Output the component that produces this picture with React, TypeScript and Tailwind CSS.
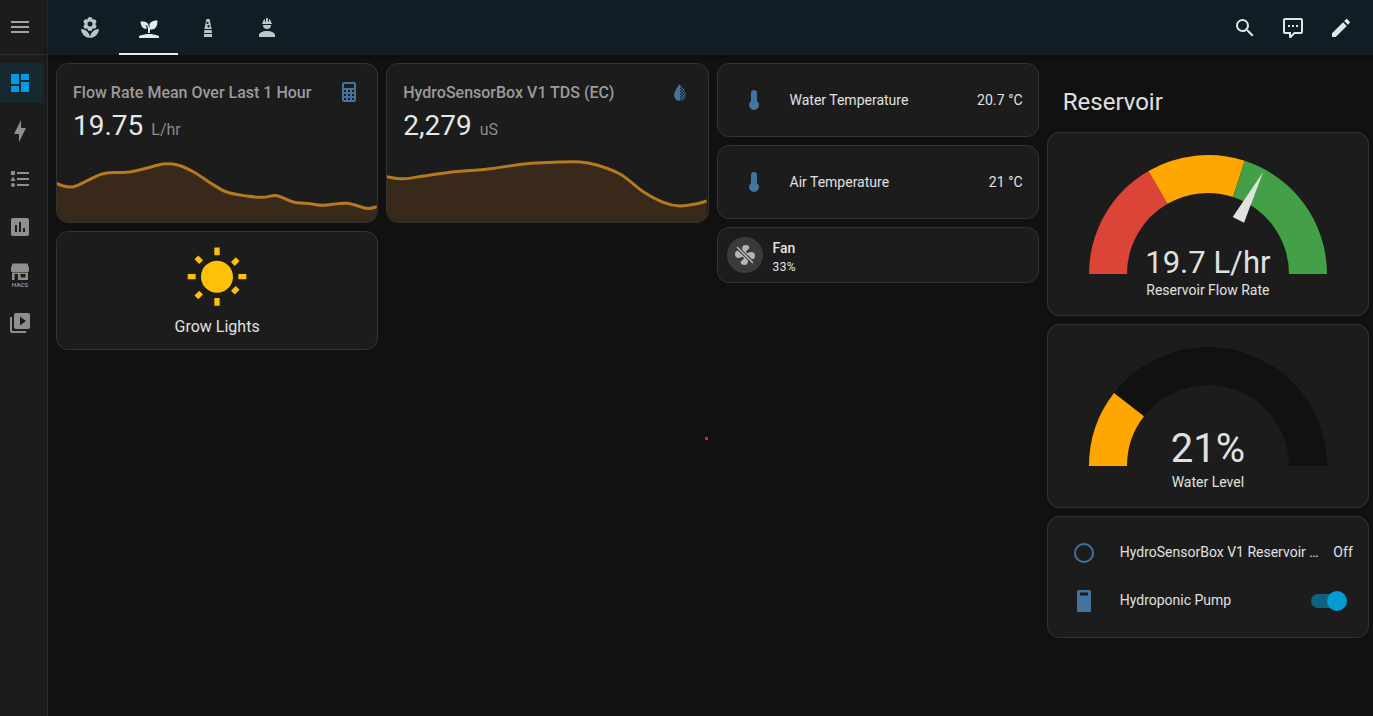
const P = {
  menu: "M3,6H21V8H3V6M3,11H21V13H3V11M3,16H21V18H3V16Z",
  dash: "M13,3V9H21V3M13,21H21V11H13M3,21H11V15H3M3,13H11V3H3V13Z",
  bolt: "M11 15H6L13 1V9H18L11 23V15Z",
  list: "M5,9.5L7.5,14H2.5L5,9.5M3,4H7V8H3V4M5,20A2,2 0 0,0 7,18A2,2 0 0,0 5,16A2,2 0 0,0 3,18A2,2 0 0,0 5,20M9,5V7H21V5H9M9,19H21V17H9V19M9,13H21V11H9V13Z",
  chart: "M19 3H5C3.9 3 3 3.9 3 5V19C3 20.1 3.9 21 5 21H19C20.1 21 21 20.1 21 19V5C21 3.9 20.1 3 19 3M9 17H7V10H9V17M13 17H11V7H13V17M17 17H15V13H17V17Z",
  play: "M4,6H2V20A2,2 0 0,0 4,22H18V20H4M20,2H8A2,2 0 0,0 6,4V16A2,2 0 0,0 8,18H20A2,2 0 0,0 22,16V4C22,2.89 21.1,2 20,2M12,14.5V5.5L18,10L12,14.5Z",
  flower: "M3,13A9,9 0 0,0 12,22C12,17 7.97,13 3,13M12,5.5A2.5,2.5 0 0,1 14.5,8A2.5,2.5 0 0,1 12,10.5A2.5,2.5 0 0,1 9.5,8A2.5,2.5 0 0,1 12,5.5M5.6,10.25A2.5,2.5 0 0,0 8.1,12.75C8.63,12.75 9.12,12.58 9.5,12.31C9.5,12.37 9.5,12.43 9.5,12.5A2.5,2.5 0 0,0 12,15A2.5,2.5 0 0,0 14.5,12.5C14.5,12.43 14.5,12.37 14.5,12.31C14.88,12.58 15.37,12.75 15.9,12.75C17.28,12.75 18.4,11.63 18.4,10.25C18.4,9.25 17.81,8.4 16.97,8C17.81,7.6 18.4,6.74 18.4,5.75C18.4,4.37 17.28,3.25 15.9,3.25C15.37,3.25 14.88,3.41 14.5,3.69C14.5,3.63 14.5,3.56 14.5,3.5A2.5,2.5 0 0,0 12,1A2.5,2.5 0 0,0 9.5,3.5C9.5,3.56 9.5,3.63 9.5,3.69C9.12,3.41 8.63,3.25 8.1,3.25A2.5,2.5 0 0,0 5.6,5.75C5.6,6.74 6.19,7.6 7.03,8C6.19,8.4 5.6,9.25 5.6,10.25M12,22A9,9 0 0,0 21,13C16,13 12,17 12,22Z",
  sprout: "M2,22V20C2,20 7,18 12,18C17,18 22,20 22,20V22H2M11.3,8.6C10.1,4.7 3.5,5.6 3.5,5.6C3.5,5.6 3.7,13.9 9.9,12.7C9.5,9.8 8,9 8,9C10.8,9 11,12.4 11,12.4V17C11.3,17 11.6,17 12,17C12.28,17 12.57,17 12.86,17.03C12.62,15.8 12.9,14.2 13.5,13.2C17.4,14.3 20.5,11.5 20.5,4.5C20.5,4.5 13.5,4 12.2,9C13.1,10.2 12.6,11.1 12.2,11.8C12.1,10.9 11.8,9.6 11.3,8.6Z",
  hat: "M12,15C7.58,15 4,16.79 4,19V21H20V19C20,16.79 16.42,15 12,15M8,9A4,4 0 0,0 12,13A4,4 0 0,0 16,9M11.5,2C11.2,2 11,2.21 11,2.5V5.5H10V3C10,3 7.75,3.86 7.75,6.75C7.75,6.75 7,6.89 7,8H17C16.95,6.89 16.25,6.75 16.25,6.75C16.25,3.86 14,3 14,3V5.5H13V2.5C13,2.21 12.81,2 12.5,2H11.5Z",
  lamp: "M10.4 3H13.6L15.6 13H8.4L10.4 3ZM11.5 5.8A1.1 1.1 0 1 0 11.5 8A1.1 1.1 0 1 0 11.5 5.8ZM12.6 9A1.2 1.2 0 1 0 12.6 11.4A1.2 1.2 0 1 0 12.6 9ZM8.4 14H15.6L16 17H8ZM8 18H16V21H8Z",
  search: "M9.5,3A6.5,6.5 0 0,1 16,9.5C16,11.11 15.41,12.59 14.44,13.73L14.71,14H15.5L20.5,19L19,20.5L14,15.5V14.71L13.73,14.44C12.59,15.41 11.11,16 9.5,16A6.5,6.5 0 0,1 3,9.5A6.5,6.5 0 0,1 9.5,3M9.5,5C7,5 5,7 5,9.5C5,12 7,14 9.5,14C12,14 14,12 14,9.5C14,7 12,5 9.5,5Z",
  comment: "M9,22A1,1 0 0,1 8,21V18H4A2,2 0 0,1 2,16V4C2,2.89 2.9,2 4,2H20A2,2 0 0,1 22,4V16A2,2 0 0,1 20,18H13.9L10.2,21.71C10,21.9 9.75,22 9.5,22V22H9M10,16V19.08L13.08,16H20V4H4V16H10M17,11H15V9H17V11M13,11H11V9H13V11M9,11H7V9H9V11Z",
  pencil: "M20.71,7.04C21.1,6.65 21.1,6 20.71,5.63L18.37,3.29C18,2.9 17.35,2.9 16.96,3.29L15.12,5.12L18.87,8.87M3,17.25V21H6.75L17.81,9.93L14.06,6.18L3,17.25Z",
  calc: "M7,2H17A2,2 0 0,1 19,4V20A2,2 0 0,1 17,22H7A2,2 0 0,1 5,20V4A2,2 0 0,1 7,2M7,4V8H17V4H7M7,10V12H9V10H7M11,10V12H13V10H11M15,10V12H17V10H15M7,14V16H9V14H7M11,14V16H13V14H11M15,14V16H17V14H15M7,18V20H9V18H7M11,18V20H13V18H11M15,18V20H17V18H15Z",
  thermo: "M15 13V5A3 3 0 0 0 9 5V13A5 5 0 1 0 15 13Z",
  fan: "M12 11A1 1 0 1 0 13 12A1 1 0 0 0 12 11M12.5 2C17 2 17.11 5.57 14.75 6.75C13.76 7.24 13.32 8.29 13.13 9.22C13.61 9.42 14.03 9.73 14.35 10.13C18.05 8.13 22.03 8.92 22.03 12.5C22.03 17 18.46 17.1 17.28 14.73C16.78 13.74 15.72 13.3 14.79 13.11C14.59 13.59 14.28 14 13.88 14.34C15.87 18.03 15.08 22 11.5 22C7 22 6.91 18.42 9.27 17.24C10.25 16.75 10.69 15.71 10.89 14.79C10.4 14.59 9.97 14.27 9.65 13.87C5.96 15.85 2 15.07 2 11.5C2 7 5.56 6.89 6.74 9.26C7.24 10.25 8.29 10.68 9.22 10.87C9.41 10.39 9.73 9.97 10.14 9.65C8.15 5.96 8.94 2 12.5 2Z",
  sun: "M3.55 18.54L4.96 19.95L6.76 18.16L5.34 16.74M11 22.45H13V19.5H11M12 5.5A6 6 0 0 0 6 11.5A6 6 0 0 0 12 17.5A6 6 0 0 0 18 11.5C18 8.18 15.31 5.5 12 5.5M20 12.5H23V10.5H20M17.24 16.74L18.66 18.16L20.45 16.37L19.04 14.96M20.45 5.66L19.04 4.25L17.24 6.04L18.66 7.46M13 .55H11V3.5H13M4 10.5H1V12.5H4M6.76 5.34L4.97 3.55L3.56 4.96L5.34 6.75L6.76 5.34Z",
};

function Icon({ d, className }: { d: string; className?: string }) {
  return (
    <svg viewBox="0 0 24 24" fill="currentColor" className={className}>
      <path d={d} />
    </svg>
  );
}

function Hacs({ className }: { className?: string }) {
  return (
    <svg viewBox="0 0 24 24" fill="currentColor" className={className}>
      <path d="M4.5 0.5H19.5L21 5V7.4C21 8.3 20.3 9 19.4 9H4.6C3.7 9 3 8.3 3 7.4V5Z" />
      <path fillRule="evenodd" d="M4 9.5H20V17H4ZM6.5 11V17H10V11ZM12.5 11V14.5H17.5V11Z" />
      <text x="12" y="23.5" textAnchor="middle" fontSize="6.2" fontWeight="700" fontFamily="Roboto, sans-serif">HACS</text>
    </svg>
  );
}

function smooth(pts: number[][]) {
  let d = `M${pts[0][0]},${pts[0][1]}`;
  for (let i = 0; i < pts.length - 1; i++) {
    const p0 = pts[Math.max(0, i - 1)];
    const p1 = pts[i];
    const p2 = pts[i + 1];
    const p3 = pts[Math.min(pts.length - 1, i + 2)];
    const c1 = [p1[0] + (p2[0] - p0[0]) / 6, p1[1] + (p2[1] - p0[1]) / 6];
    const c2 = [p2[0] - (p3[0] - p1[0]) / 6, p2[1] - (p3[1] - p1[1]) / 6];
    d += `C${c1[0].toFixed(1)},${c1[1].toFixed(1)} ${c2[0].toFixed(1)},${c2[1].toFixed(1)} ${p2[0].toFixed(1)},${p2[1].toFixed(1)}`;
  }
  return d;
}

function Spark({ data }: { data: number[][] }) {
  const pts = data.map(([x, y]) => [x / 3 - 7, y / 3 + 60 - 143]);
  const line = smooth(pts);
  const last = pts[pts.length - 1][0];
  return (
    <svg viewBox="0 0 320 79" className="block h-[79px] w-[320px] shrink-0">
      <path d={`${line}L${last},79L${pts[0][0]},79Z`} fill="#38291a" />
      <path d={line} fill="none" stroke="#b57a1e" strokeWidth="3" />
    </svg>
  );
}

function polar(deg: number, r: number, cy = 119) {
  const a = (deg * Math.PI) / 180;
  return [119 - r * Math.cos(a), cy - r * Math.sin(a)];
}

function arc(a: number, b: number) {
  const R = 119;
  const r = 81;
  const [x1, y1] = polar(a, R);
  const [x2, y2] = polar(b, R);
  const [x3, y3] = polar(b, r);
  const [x4, y4] = polar(a, r);
  return `M${x1},${y1}A${R},${R} 0 0 1 ${x2},${y2}L${x3},${y3}A${r},${r} 0 0 0 ${x4},${y4}Z`;
}

const card = "rounded-xl border border-[#333333] bg-[#1c1c1c]";

function Stat({ title, value, unit, icon, data }: { title: string; value: string; unit: string; icon: React.ReactNode; data: number[][] }) {
  return (
    <div className={`${card} flex h-[160px] flex-col overflow-hidden`}>
      <div className="flex h-[79px] shrink-0 items-start justify-between pl-4 pr-4 pt-[16px]">
        <div className="pt-[1px]">
          <div className="text-[16px] font-medium leading-6 text-[#9b9b9b]">{title}</div>
          <div className="mt-[3px] flex h-9 items-baseline text-[#e6e6e6]">
            <span className="text-[28px] leading-9">{value}</span>
            <span className="ml-[8px] text-[16px] leading-9 text-[#8c8c8c]">{unit}</span>
          </div>
        </div>
        {icon}
      </div>
      <Spark data={data} />
    </div>
  );
}

function Row({ label, value }: { label: string; value: string }) {
  return (
    <div className={`${card} flex h-[74px] items-center pl-[24px] pr-[15px]`}>
      <Icon d={P.thermo} className="h-6 w-6 text-[#44739e]" />
      <div className="ml-[24px] text-[14px] text-[#e1e1e1]">{label}</div>
      <div className="ml-auto text-[14px] tracking-[0.1px] text-[#e1e1e1]">{value}</div>
    </div>
  );
}

function Gauge({ value, label, children, big }: { value: string; label: string; children: React.ReactNode; big?: boolean }) {
  return (
    <div className={`${card} flex h-[184px] flex-col items-center pt-[22px]`}>
      <div className="relative h-[119px] w-[238px]">
        <svg viewBox="0 0 238 119" className="block h-[119px] w-[238px] overflow-visible">
          {children}
        </svg>
        <div className={`absolute inset-x-0 text-center leading-none text-[#e1e1e1] ${big ? "-bottom-[3px] text-[40px]" : "-bottom-[4px] text-[31px]"}`}>{value}</div>
      </div>
      <div className="mt-[8px] text-[14px] leading-[17px] text-[#e1e1e1]">{label}</div>
    </div>
  );
}

const flow1 = [[20,370],[40,378],[70,380],[100,368],[150,344],[180,338],[230,337],[280,327],[340,312],[380,314],[430,335],[480,368],[530,396],[590,408],[640,412],[680,407],[730,426],[780,431],[820,436],[890,430],[950,445],[980,440]];
const flow2 = [[20,350],[70,356],[130,348],[200,338],[330,326],[440,311],[520,307],[600,306],[650,315],[720,342],[790,395],[850,427],[900,438],[950,431],[980,423]];
const DROP = "M12,4C12,4 6,10.5 6,15A6,6 0 0,0 18,15C18,10.5 12,4 12,4Z";

export default function App() {
  const nav = [P.bolt, P.list, P.chart];
  return (
    <div className="relative flex h-[716px] w-[1373px] overflow-hidden bg-[#111111] font-['Roboto',sans-serif]">
      <aside className="flex w-12 shrink-0 flex-col border-r border-[#2a2a2a] bg-[#1c1c1c] text-[#8f8f8f]">
        <div className="flex h-[55px] items-center border-b border-[#2f2f2f] pl-[8px]">
          <Icon d={P.menu} className="h-6 w-6 text-[#a3a3a3]" />
        </div>
        <div className="flex flex-col pt-2">
          <div className="flex h-10 w-11 items-center bg-[#13282f] pl-[8px] text-[#039be5]">
            <Icon d={P.dash} className="h-6 w-6" />
          </div>
          {nav.map((d) => (
            <div key={d} className="mt-2 flex h-10 items-center pl-[8px]">
              <Icon d={d} className="h-6 w-6" />
            </div>
          ))}
          <div className="mt-2 flex h-10 items-center pl-[8px]">
            <Hacs className="h-6 w-6" />
          </div>
          <div className="mt-2 flex h-10 items-center pl-[8px]">
            <Icon d={P.play} className="h-6 w-6" />
          </div>
        </div>
      </aside>
      <main className="flex min-w-0 flex-1 flex-col">
        <header className="flex h-[55px] shrink-0 items-stretch bg-[#101d24] pl-[12px] pr-[20px] text-[#dfe6e9] shadow-[0_2px_4px_rgba(0,0,0,0.35)]">
          {[P.flower, P.sprout, P.lamp, P.hat].map((d, i) => (
            <div key={d} className={`flex w-[59px] items-center justify-center ${i === 1 ? "border-b-2 border-[#e4ecef] pt-[2px] text-[#e4ecef]" : "text-[#bcc5c9]"}`}>
              <Icon d={d} className="h-6 w-6" />
            </div>
          ))}
          <div className="ml-auto flex items-center gap-6">
            <Icon d={P.search} className="h-6 w-6" />
            <Icon d={P.comment} className="h-6 w-6" />
            <Icon d={P.pencil} className="h-6 w-6" />
          </div>
        </header>
        <div className="grid grid-cols-4 items-start gap-2 pl-2 pr-1 pt-2">
          <div className="flex flex-col gap-2">
            <Stat title="Flow Rate Mean Over Last 1 Hour" value="19.75" unit="L/hr" data={flow1} icon={<Icon d={P.calc} className="h-6 w-6 shrink-0 text-[#44739e]" />} />
            <div className={`${card} flex h-[119px] flex-col items-center pt-[14px]`}>
              <Icon d={P.sun} className="h-16 w-16 text-[#ffc107]" />
              <div className="mt-[5px] text-[16px] leading-6 text-[#e1e1e1]">Grow Lights</div>
            </div>
          </div>
          <div>
            <Stat title="HydroSensorBox V1 TDS (EC)" value="2,279" unit="uS" data={flow2} icon={
              <svg viewBox="0 0 24 24" className="h-6 w-6 shrink-0">
                <defs>
                  <pattern id="chk" width="3" height="3" patternUnits="userSpaceOnUse">
                    <rect width="1.5" height="1.5" fill="#44739e" />
                    <rect x="1.5" y="1.5" width="1.5" height="1.5" fill="#44739e" />
                  </pattern>
                  <clipPath id="left"><rect x="0" y="0" width="12" height="24" /></clipPath>
                  <clipPath id="right"><rect x="12" y="0" width="12" height="24" /></clipPath>
                </defs>
                <path d={DROP} fill="#44739e" clipPath="url(#left)" />
                <path d={DROP} fill="url(#chk)" clipPath="url(#right)" />
              </svg>
            } />
          </div>
          <div className="flex flex-col gap-2">
            <Row label="Water Temperature" value="20.7 °C" />
            <Row label="Air Temperature" value="21 °C" />
            <div className={`${card} flex h-[56px] items-center pl-[9px]`}>
              <div className="flex h-9 w-9 items-center justify-center rounded-full bg-[#3a3a3a] text-[#b5b5b5]">
                <svg viewBox="0 0 24 24" className="h-6 w-6" fill="currentColor">
                  <path d={P.fan} />
                  <path d="M4 4L20 20" stroke="#3a3a3a" strokeWidth="3.4" />
                  <path d="M4 4L20 20" stroke="currentColor" strokeWidth="1.6" />
                </svg>
              </div>
              <div className="ml-[10px] pt-[3px]">
                <div className="text-[14px] font-medium leading-5 text-[#e1e1e1]">Fan</div>
                <div className="mt-[1px] text-[12px] leading-4 tracking-[0.4px] text-[#e1e1e1]">33%</div>
              </div>
            </div>
          </div>
          <div className="flex flex-col gap-2">
            <h1 className="h-[61px] pl-4 pt-[23px] text-[24px] font-normal leading-8 text-[#e1e1e1]">Reservoir</h1>
            <Gauge value="19.7 L/hr" label="Reservoir Flow Rate">
              <path d={arc(0, 60)} fill="#db4437" />
              <path d={arc(60, 108)} fill="#ffa600" />
              <path d={arc(108, 180)} fill="#43a047" />
              <polygon points="174.3,16.7 143.7,62 155,67.7" fill="#e1e1e1" />
            </Gauge>
            <Gauge value="21%" label="Water Level" big>
              <path d={arc(37.8, 180)} fill="#111111" />
              <path d={arc(0, 37.8)} fill="#ffa600" />
            </Gauge>
            <div className={`${card} flex h-[122px] flex-col justify-center gap-2 pl-[24px] pr-[15px]`}>
              <div className="flex h-10 items-center">
                <svg viewBox="0 0 24 24" className="h-6 w-6 shrink-0" fill="none">
                  <circle cx="12" cy="12" r="9" stroke="#44739e" strokeWidth="2" />
                </svg>
                <div className="ml-[24px] pb-[2px] text-[14px] text-[#e1e1e1]">HydroSensorBox V1 Reservoir …</div>
                <div className="ml-auto pb-[2px] text-[14px] tracking-[0.1px] text-[#e1e1e1]">Off</div>
              </div>
              <div className="flex h-10 items-center">
                <svg viewBox="0 0 24 24" className="h-6 w-6 shrink-0" fill="#44739e">
                  <path fillRule="evenodd" d="M6.5 1H17.5A1.5 1.5 0 0 1 19 2.5V21.5A1.5 1.5 0 0 1 17.5 23H6.5A1.5 1.5 0 0 1 5 21.5V2.5A1.5 1.5 0 0 1 6.5 1ZM8 3.5V6.5H16V3.5Z" />
                </svg>
                <div className="ml-[24px] pb-[2px] text-[14px] text-[#e1e1e1]">Hydroponic Pump</div>
                <div className="relative ml-auto mr-[12px] h-[14px] w-[30px] rounded-full bg-[#0e6480]">
                  <div className="absolute -top-[3px] left-[16px] h-5 w-5 rounded-full bg-[#039bd0]" />
                </div>
              </div>
            </div>
          </div>
        </div>
      </main>
      <div className="absolute left-[705px] top-[437px] h-[3px] w-[3px] bg-[#d12a1e]" />
    </div>
  );
}
